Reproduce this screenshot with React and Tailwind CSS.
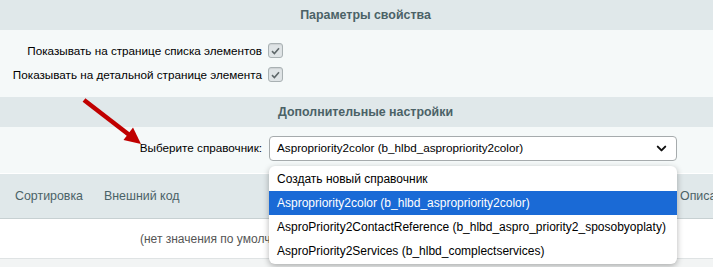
import { ChevronDown } from "lucide-react";

const font = { fontFamily: '"Liberation Sans", Arial, sans-serif' };

const Check = () => (
  <span className="flex h-[15px] w-[15px] items-center justify-center rounded-[3px] border border-[#a9b1b3] bg-[#dfe4e6] shadow-[inset_0_1px_1px_rgba(0,0,0,0.08)]">
    <svg width="9" height="8" viewBox="0 0 9 8">
      <path d="M1 4.2 L3.4 6.5 L8 1.3" fill="none" stroke="#5f686a" strokeWidth="1.6" />
    </svg>
  </span>
);

const SectionHead = ({ children }) => (
  <div className="flex h-[30px] items-center justify-center bg-[#e0e8ea] pl-[18px] text-[12.4px] font-bold text-[#4b6267]">
    {children}
  </div>
);

const CheckRow = ({ label }) => (
  <div className="flex h-[24px] items-center">
    <div className="w-[263px] whitespace-nowrap pr-[1px] text-right text-[11.7px] text-[#000]">{label}</div>
    <div className="pl-[5px]">
      <Check />
    </div>
  </div>
);

const options = [
  "Создать новый справочник",
  "Aspropriority2color (b_hlbd_aspropriority2color)",
  "AsproPriority2ContactReference (b_hlbd_aspro_priority2_sposobyoplaty)",
  "AsproPriority2Services (b_hlbd_complectservices)",
];

export default function App() {
  return (
    <div className="relative h-[267px] w-[713px] overflow-hidden bg-white" style={font}>
      <SectionHead>Параметры свойства</SectionHead>
      <div className="flex h-[67px] flex-col justify-center bg-[#f5f9f9] pb-[2px]">
        <CheckRow label="Показывать на странице списка элементов" />
        <CheckRow label="Показывать на детальной странице элемента" />
      </div>
      <SectionHead>Дополнительные настройки</SectionHead>
      <div className="flex h-[46px] items-center bg-[#f5f9f9] pb-[4px]">
        <div className="w-[263px] whitespace-nowrap pr-[1px] text-right text-[11.7px] text-[#000]">Выберите справочник:</div>
        <div className="relative ml-[6px]">
          <div className="flex h-[25px] w-[408px] items-center justify-between rounded-[4px] border border-[#a6abad] bg-white pl-[7px] pr-[7px] text-[11.7px] text-[#000]">
            <span className="whitespace-nowrap">Aspropriority2color (b_hlbd_aspropriority2color)</span>
            <ChevronDown size={15} strokeWidth={3.2} color="#111" />
          </div>
        </div>
      </div>
      <div className="h-[1px] bg-white" />
      <div className="flex h-[45px] items-center whitespace-nowrap border-b border-[#c7d0d2] bg-[#e0e8ea] text-[12.4px] text-[#4b6267]">
        <span className="ml-[15px]">Сортировка</span>
        <span className="ml-[21px]">Внешний код</span>
        <span className="ml-auto w-[33px] overflow-hidden">Описание</span>
      </div>
      <div className="flex h-[40px] items-center whitespace-nowrap border-b border-[#dfe3e4] bg-white pl-[140px] text-[12px] text-[#555]">
        (нет значения по умолчанию)
      </div>
      <div className="h-[10px] bg-[#f2f4f4]" />

      <div className="absolute left-[269px] top-[166px] w-[408px] overflow-hidden rounded-[6px] bg-white py-[1px] shadow-[0_2px_6px_rgba(0,0,0,0.3)]">
        {options.map((o, i) => (
          <div
            key={o}
            className={`flex h-[24px] items-center whitespace-nowrap pl-[8px] text-[12px] ${i === 1 ? "bg-[#1a6ad6] text-white" : "text-[#000]"}`}
          >
            {o}
          </div>
        ))}
      </div>

      <svg className="absolute left-0 top-0" width="713" height="267" viewBox="0 0 713 267">
        <line x1="84" y1="100" x2="130" y2="135.5" stroke="#c00000" strokeWidth="4.5" />
        <polygon points="141,144 123.5,140 133,127.5" fill="#c00000" />
      </svg>
    </div>
  );
}
